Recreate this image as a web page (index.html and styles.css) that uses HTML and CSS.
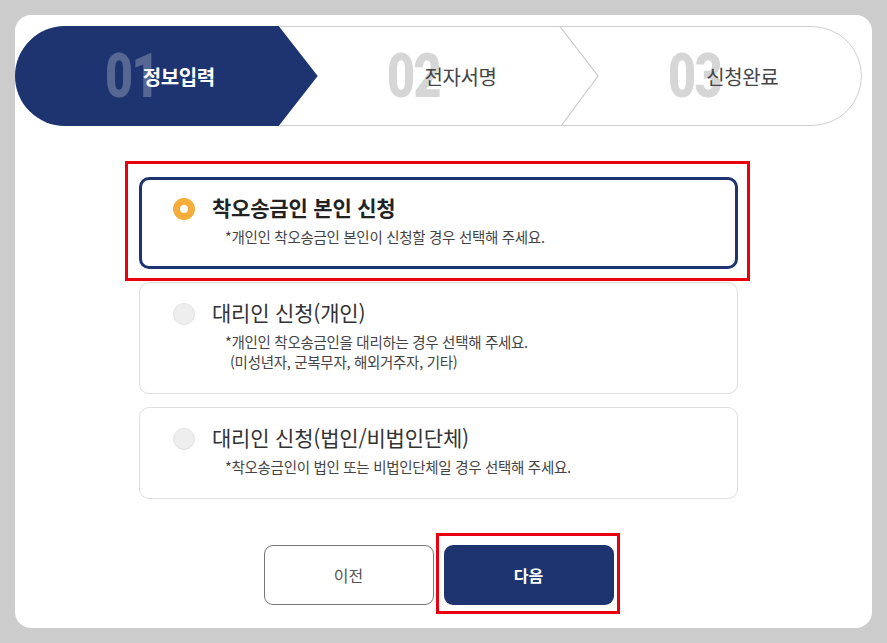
FILE: index.html
```html
<!DOCTYPE html>
<html lang="ko">
<head>
    <meta charset="UTF-8">
    <meta name="viewport" content="width=device-width, initial-scale=1.0">
    <title>착오송금 반환지원 신청</title>
    <link rel="stylesheet" href="styles.css">
</head>
<body>
    <div class="panel">
        <ol class="stepper">
            <li class="step active">
                <span class="step-num">01</span>
                <span class="step-title">정보입력</span>
            </li>
            <li class="step">
                <span class="step-num">02</span>
                <span class="step-title">전자서명</span>
                <svg class="step-sep" width="40" height="100" viewBox="0 0 40 100">
                    <polyline points="0.5,0 39,50 2,100" fill="none" stroke="#c9c9c9" stroke-width="1.2"/>
                </svg>
            </li>
            <li class="step">
                <span class="step-num">03</span>
                <span class="step-title">신청완료</span>
            </li>
        </ol>

        <div class="options">
            <label class="option selected marked">
                <span class="radio"></span>
                <span class="option-text">
                    <span class="option-title">착오송금인 본인 신청</span>
                    <span class="option-desc">*개인인 착오송금인 본인이 신청할 경우 선택해 주세요.</span>
                </span>
            </label>
            <label class="option">
                <span class="radio"></span>
                <span class="option-text">
                    <span class="option-title">대리인 신청(개인)</span>
                    <span class="option-desc">*개인인 착오송금인을 대리하는 경우 선택해 주세요.<span class="desc-indent">(미성년자, 군복무자, 해외거주자, 기타)</span></span>
                </span>
            </label>
            <label class="option">
                <span class="radio"></span>
                <span class="option-text">
                    <span class="option-title">대리인 신청(법인/비법인단체)</span>
                    <span class="option-desc">*착오송금인이 법인 또는 비법인단체일 경우 선택해 주세요.</span>
                </span>
            </label>
        </div>

        <div class="actions">
            <button class="btn btn-prev" type="button">이전</button>
            <button class="btn btn-next marked" type="button">다음</button>
        </div>
    </div>
</body>
</html>
```

FILE: styles.css
```css
* {
    margin: 0;
    padding: 0;
    box-sizing: border-box;
}

body {
    font-family: "Noto Sans CJK KR", "Noto Sans", sans-serif;
    background: #cccccc;
}

.panel {
    margin: 15px;
    width: 857px;
    height: 613px;
    background: #fff;
    border-radius: 16px;
    padding: 11px 10px 0 0;
}

/* 단계 표시 */
.stepper {
    list-style: none;
    display: flex;
    height: 100px;
    border: 1px solid #cfcfcf;
    border-radius: 50px;
}

.step {
    flex: 1;
    position: relative;
    display: flex;
    align-items: center;
    justify-content: center;
    padding-left: 6px;
}

.step.active::before {
    content: "";
    position: absolute;
    top: -1px;
    bottom: -1px;
    left: -1px;
    right: -20px;
    background: #1e3471;
    border-radius: 50px 0 0 50px;
    clip-path: polygon(0 0, calc(100% - 39px) 0, 100% 50%, calc(100% - 39px) 100%, 0 100%);
}

.step-sep {
    position: absolute;
    right: -20px;
    top: -1px;
}

.step-num {
    position: relative;
    display: inline-block;
    width: 38px;
    font-family: Roboto, sans-serif;
    font-size: 62px;
    font-weight: 900;
    line-height: 1;
    letter-spacing: -2px;
    color: #d6d6d6;
    white-space: nowrap;
    transform: scaleX(0.78);
    transform-origin: left center;
}

.step-title {
    position: relative;
    font-size: 20px;
    color: #444;
    letter-spacing: -0.4px;
}

.active .step-num {
    color: rgba(255, 255, 255, 0.25);
}

.active .step-title {
    color: #fff;
    font-weight: 700;
}

/* 신청 유형 */
.options {
    width: 599px;
    margin: 51px auto 0;
    display: flex;
    flex-direction: column;
    gap: 13px;
}

.option {
    position: relative;
    display: flex;
    align-items: flex-start;
    gap: 17px;
    border: 1px solid #dedede;
    border-radius: 10px;
    padding: 16px 20px 21px 33px;
    cursor: pointer;
}

.option.selected {
    border: 3px solid #1e3471;
    padding: 14px 18px 19px 31px;
}

.radio {
    flex-shrink: 0;
    width: 22px;
    height: 22px;
    margin-top: 4px;
    border-radius: 50%;
    background: #eeeeee;
    border: 1px solid #e2e2e2;
}

.selected .radio {
    background: #fff;
    border: 7px solid #f5ad3b;
}

.option-text {
    display: flex;
    flex-direction: column;
}

.option-title {
    font-size: 21px;
    line-height: 26px;
    color: #333;
    letter-spacing: -0.2px;
}

.selected .option-title {
    font-weight: 700;
    color: #222;
}

.option-desc {
    margin-top: 7px;
    padding-left: 13px;
    font-size: 14.5px;
    line-height: 20px;
    color: #444;
    letter-spacing: -0.3px;
}

.desc-indent {
    display: block;
    padding-left: 5px;
}

/* 빨간 표시 박스 */
.marked::after {
    content: "";
    position: absolute;
    border: 3px solid #e8000f;
    pointer-events: none;
}

.option.marked::after {
    top: -19px;
    left: -17px;
    right: -15px;
    bottom: -15px;
}

/* 버튼 */
.actions {
    display: flex;
    justify-content: center;
    gap: 10px;
    margin-top: 46px;
}

.btn {
    width: 170px;
    height: 60px;
    border-radius: 9px;
    font-family: inherit;
    font-size: 16px;
    cursor: pointer;
}

.btn-prev {
    background: #fff;
    border: 1px solid #777;
    color: #555;
}

.btn-next {
    position: relative;
    background: #1e3471;
    border: none;
    color: #fff;
    font-weight: 700;
}

.btn-next.marked::after {
    top: -12px;
    left: -8px;
    right: -6px;
    bottom: -9px;
}
```
